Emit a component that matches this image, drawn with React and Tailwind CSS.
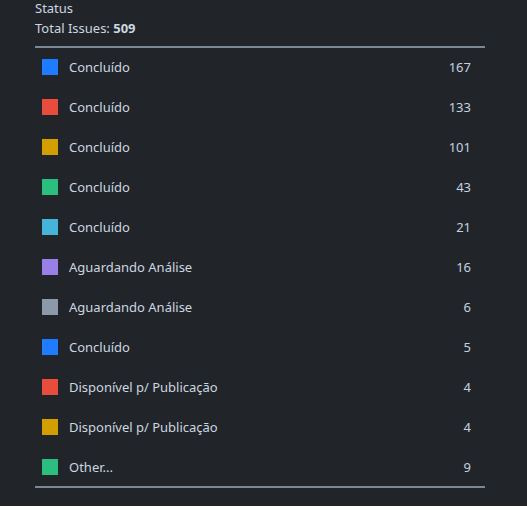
import React from 'react'

const statuses = [
  { name: 'Concluído', color: 'bg-[#1f7bff]', count: 167 },
  { name: 'Concluído', color: 'bg-[#e74c3c]', count: 133 },
  { name: 'Concluído', color: 'bg-[#d29e00]', count: 101 },
  { name: 'Concluído', color: 'bg-[#2bbf7f]', count: 43 },
  { name: 'Concluído', color: 'bg-[#45b4d8]', count: 21 },
  { name: 'Aguardando Análise', color: 'bg-[#9880e8]', count: 16 },
  { name: 'Aguardando Análise', color: 'bg-[#8b99a8]', count: 6 },
  { name: 'Concluído', color: 'bg-[#1f7bff]', count: 5 },
  { name: 'Disponível p/ Publicação', color: 'bg-[#e74c3c]', count: 4 },
  { name: 'Disponível p/ Publicação', color: 'bg-[#d29e00]', count: 4 },
  { name: 'Other...', color: 'bg-[#2bbf7f]', count: 9 },
]

const StatusRow = ({ name, color, count }) => (
  <div className="flex items-center h-[38px] pl-[7px] pr-[14px]">
    <span className={`w-4 h-4 shrink-0 ${color}`} />
    <span className="ml-[11px] flex-1 text-[#cdd6e0]">{name}</span>
    <span className="text-[#c4d2e0]">{count}</span>
  </div>
)

const App = () => {
  return (
    <div
      className="min-h-screen bg-[#212529] text-[13px] leading-[20px] text-[#cdd6e0]"
      style={{ fontFamily: '"Noto Sans", "Open Sans", sans-serif' }}
    >
      <div className="w-[450px] ml-[35px] -mt-[2px]">
        <p>Status</p>
        <p>
          Total Issues: <span className="font-bold">509</span>
        </p>

        <div className="mt-[8px] border-t-2 border-b-2 border-[#7c8796] flex flex-col gap-[2px]">
          {statuses.map((status, index) => (
            <StatusRow key={`status-${index}`} {...status} />
          ))}
        </div>
      </div>
    </div>
  )
}

export default App
